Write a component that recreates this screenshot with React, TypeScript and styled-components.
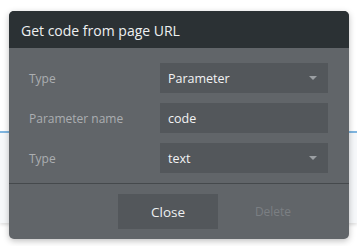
import React from "react";
import styled, { createGlobalStyle } from "styled-components";

const GlobalStyle = createGlobalStyle`
  html, body {
    margin: 0;
    padding: 0;
    background: #ffffff;
    font-family: "Open Sans", "Liberation Sans", sans-serif;
  }
`;

const Page = styled.div`
  position: relative;
  width: 357px;
  height: 246px;
  overflow: hidden;
  background: #ffffff;
`;

const Backdrop = styled.div`
  position: absolute;
  left: 0;
  right: 0;
  top: 131px;
  height: 90px;
  background: #f6f8fa;
  border-top: 2px solid #7fb6e1;
  box-shadow: 0 2px 3px rgba(0, 0, 0, 0.12);
`;

const Dialog = styled.div`
  position: absolute;
  left: 9px;
  top: 11px;
  width: 340px;
  height: 228px;
  border-radius: 5px;
  overflow: hidden;
  background: #616569;
  box-shadow: 0 2px 6px rgba(0, 0, 0, 0.25);
  display: flex;
  flex-direction: column;
`;

const Header = styled.div`
  height: 37px;
  background: #2b3134;
  color: #eef0f1;
  font-size: 14px;
  display: flex;
  align-items: center;
  padding-left: 12px;
  padding-top: 1px;
  box-sizing: border-box;
`;

const Body = styled.div`
  display: flex;
  flex-direction: column;
  gap: 10px;
  padding: 15px 21px 10px 20px;
  border-bottom: 1px solid #45494c;
`;

const Row = styled.div`
  display: flex;
  align-items: center;
  height: 30px;
`;

const Label = styled.div`
  width: 131px;
  font-size: 12px;
  color: #abaeb1;
`;

const Field = styled.div`
  flex: 1;
  height: 30px;
  background: #53575b;
  color: #f2f3f4;
  font-size: 12.5px;
  display: flex;
  align-items: center;
  justify-content: space-between;
  padding: 0 11px 0 8px;
  box-sizing: border-box;
`;

const Caret = styled.span`
  width: 0;
  height: 0;
  border-left: 4px solid transparent;
  border-right: 4px solid transparent;
  border-top: 4px solid #9b9fa3;
`;

const Footer = styled.div`
  display: flex;
  align-items: center;
  padding: 10px 0 0 109px;
`;

const CloseButton = styled.button`
  width: 100px;
  height: 35px;
  border: none;
  background: #53575b;
  color: #eef0f1;
  font-family: inherit;
  font-size: 13.5px;
  padding: 0;
`;

const DeleteButton = styled.button`
  width: 110px;
  height: 35px;
  border: none;
  background: transparent;
  color: #7b7f83;
  font-family: inherit;
  font-size: 12px;
  padding: 0;
`;

export default function App() {
  return (
    <Page>
      <GlobalStyle />
      <Backdrop />
      <Dialog>
        <Header>Get code from page URL</Header>
        <Body>
          <Row>
            <Label>Type</Label>
            <Field>
              Parameter
              <Caret />
            </Field>
          </Row>
          <Row>
            <Label>Parameter name</Label>
            <Field>code</Field>
          </Row>
          <Row>
            <Label>Type</Label>
            <Field>
              text
              <Caret />
            </Field>
          </Row>
        </Body>
        <Footer>
          <CloseButton>Close</CloseButton>
          <DeleteButton>Delete</DeleteButton>
        </Footer>
      </Dialog>
    </Page>
  );
}
